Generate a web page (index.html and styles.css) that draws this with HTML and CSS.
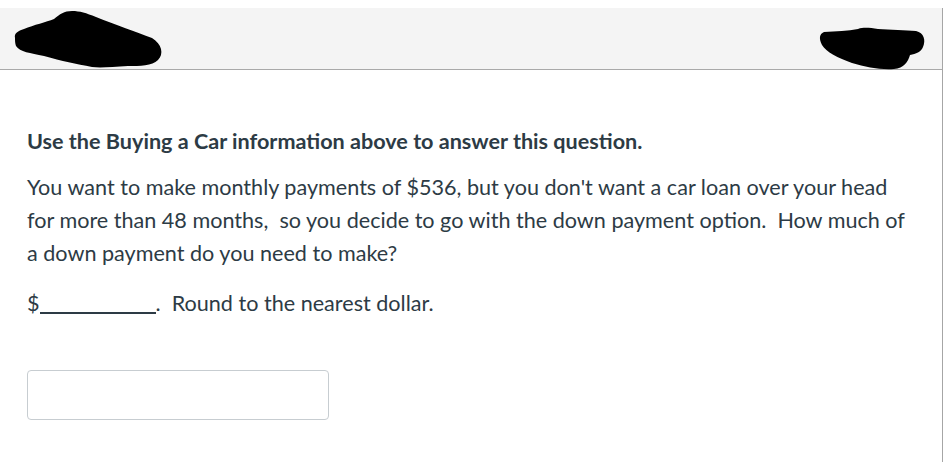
FILE: index.html
```html
<!DOCTYPE html>
<html>
<head>
<meta charset="utf-8">
<link rel="stylesheet" href="styles.css">
</head>
<body>
<div class="frame">
  <div class="header"></div>
  <svg class="redactions" width="946" height="70" viewBox="0 0 946 70">
    <path d="M15 30 C14 25 18 23 24 21 C34 17 46 14 54 11 C60 6 64 3 72 3 C80 3 86 5 96 9 C116 17 136 24 152 30 C162 36 164 46 158 52 C152 58 140 58 128 58 C112 59 100 60 92 59 C76 56 62 53 44 48 C30 45 20 44 16 38 C15 35 15 33 15 30 Z" fill="#000"/>
    <path d="M824 24 C836 23 848 23 858 21 C864 19 870 20 878 21 C890 22 906 22 916 23 C924 25 926 32 923 39 C921 44 916 46 910 47 C908 54 904 60 894 61 C880 62 866 59 852 55 C838 50 826 44 822 37 C819 31 819 26 824 24 Z" fill="#000"/>
  </svg>
  <div class="content">
    <p class="title">Use the Buying a Car information above to answer this question.</p>
    <p class="body">You want to make monthly payments of $536, but you don't want a car loan over your head for more than 48 months,&nbsp; so you decide to go with the down payment option.&nbsp; How much of a down payment do you need to make?</p>
    <p class="answer">$<span class="blank"></span>.&nbsp; Round to the nearest dollar.</p>
    <div class="input"></div>
  </div>
</div>
</body>
</html>
```
FILE: styles.css
```css
html, body {
  margin: 0;
  padding: 0;
  background: #fff;
}
.frame {
  width: 942px;
  height: 461px;
  border-right: 1px solid #a6a6a6;
  border-bottom: 1px solid #a6a6a6;
  font-family: Lato, "Open Sans", sans-serif;
  color: #2d3b45;
  position: relative;
}
.header {
  margin-top: 8px;
  height: 61px;
  background: #f4f4f4;
  border-bottom: 1px solid #a9a9a9;
}
.redactions {
  position: absolute;
  left: 0;
  top: 0;
}
.content {
  padding: 0 30px 0 27px;
}
.title {
  margin: 55px 0 0;
  font-weight: 700;
  font-size: 21.6px;
  line-height: 32px;
}
.body {
  margin: 14px 0 0;
  font-size: 21.6px;
  line-height: 33px;
}
.answer {
  margin: 17px 0 0;
  font-size: 21.6px;
  line-height: 33px;
}
.blank {
  display: inline-block;
  width: 116px;
  border-bottom: 2px solid #2d3b45;
  vertical-align: baseline;
  margin-bottom: -3px;
  height: 0;
}
.input {
  margin-top: 50px;
  width: 300px;
  height: 48px;
  border: 1px solid #c7cdd1;
  border-radius: 4px;
}
```
